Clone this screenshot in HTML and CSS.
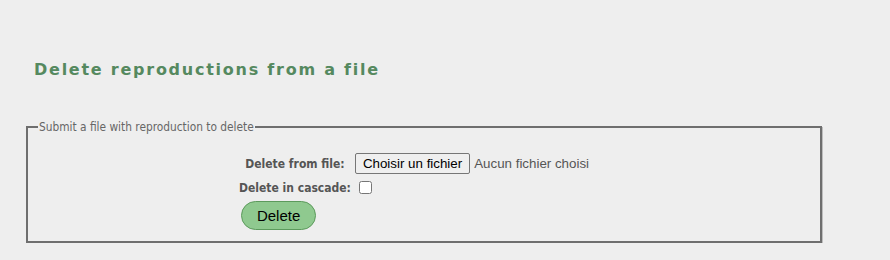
FILE: index.html
```html
<!DOCTYPE html>
<html lang="en">
<head>
    <meta charset="UTF-8">
    <title>Delete reproductions</title>
    <link rel="stylesheet" href="styles.css">
</head>
<body>

<div class="page">
    <h2 class="title">Delete reproductions from a file</h2>

    <form class="upload-form" onsubmit="return false;">
        <fieldset>
            <legend>Submit a file with reproduction to delete</legend>
            <table class="form-table">
                <tr>
                    <th><label for="file">Delete from file:</label></th>
                    <td>
                        <label class="file-picker">
                            <input type="file" id="file" name="file">
                            <span class="file-btn">Choisir un fichier</span>
                            <span class="file-name">Aucun fichier choisi</span>
                        </label>
                    </td>
                </tr>
                <tr>
                    <th><label for="cascade">Delete in cascade:</label></th>
                    <td><input type="checkbox" id="cascade" name="cascade"></td>
                </tr>
                <tr>
                    <td colspan="2"><button type="submit" class="btn-delete">Delete</button></td>
                </tr>
            </table>
        </fieldset>
    </form>
</div>

</body>
</html>
```

FILE: styles.css
```css
body {
    margin: 0;
    background-color: #eeeeee;
    font-family: "DejaVu Sans", Verdana, sans-serif;
}
.page {
    padding: 60px 26px 0 26px;
    width: 796px;
}
.title {
    margin: 0 0 41px 8px;
    font-size: 16px;
    font-weight: bold;
    letter-spacing: 1.75px;
    color: #55895f;
}
.upload-form fieldset {
    margin: 0;
    padding: 16px 0 8px 0;
    border: 2px solid #6e6e6e;
    box-shadow: 1px 1px 0 #bdbdbd;
}
.upload-form legend {
    padding: 0 1px;
    margin-left: 10px;
    font-family: "DejaVu Sans Condensed", Tahoma, sans-serif;
    font-size: 11.8px;
    color: #666;
}
.form-table {
    margin: 0 auto;
    border-spacing: 2px;
}
.form-table th {
    font-family: "DejaVu Sans Condensed", Tahoma, sans-serif;
    font-size: 12px;
    font-weight: bold;
    color: #555;
    padding: 1px;
}
.form-table td {
    padding: 1px;
    font-family: "Liberation Sans", Arial, sans-serif;
}
.file-picker {
    display: flex;
    align-items: center;
    width: 254px;
}
.file-picker input {
    display: none;
}
.file-btn {
    font-size: 13.33px;
    padding: 2px 7px;
    border: 1px solid #767676;
    border-radius: 2px;
    background-color: #efefef;
    color: #000;
}
.file-name {
    margin-left: 4px;
    font-size: 13.33px;
    color: #555;
}
.form-table input[type="checkbox"] {
    width: 13px;
    height: 13px;
    margin: 3px 3px 3px 4px;
    vertical-align: middle;
}
.btn-delete {
    margin: 0 0 0 2px;
    width: 75px;
    height: 29px;
    font-family: "Liberation Sans", Arial, sans-serif;
    font-size: 15px;
    color: #000;
    background-color: #8fc98f;
    border: 1px solid #5c9a5c;
    border-radius: 15px;
    cursor: pointer;
}
```
